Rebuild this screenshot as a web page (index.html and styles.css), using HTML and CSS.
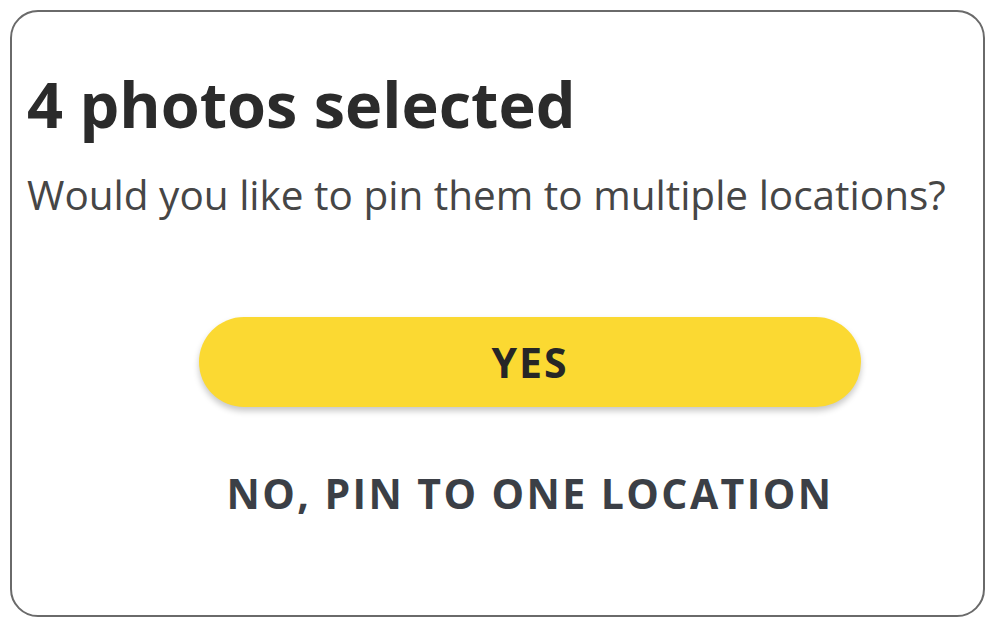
FILE: index.html
```html
<!DOCTYPE html>
<html>
<head>
<meta charset="utf-8">
<link rel="stylesheet" href="styles.css">
</head>
<body>
<div class="card">
  <h1 class="title">4 photos selected</h1>
  <p class="subtitle">Would you like to pin them to multiple locations?</p>
  <div class="actions">
    <button class="btn-yes">YES</button>
    <button class="btn-no">NO, PIN TO ONE LOCATION</button>
  </div>
</div>
</body>
</html>
```
FILE: styles.css
```css
html, body {
  margin: 0;
  padding: 0;
  background: #ffffff;
}
body {
  padding: 10px 11px 12px 10px;
  font-family: "Open Sans", Lato, sans-serif;
}
.card {
  box-sizing: border-box;
  height: 607px;
  border: 2px solid #6a6a6a;
  border-radius: 28px;
  padding: 54px 0 0 15px;
}
.title {
  margin: 0;
  font-size: 63px;
  font-weight: 700;
  line-height: 76px;
  color: #2b2b2b;
}
.subtitle {
  margin: 28px 0 0 0;
  font-size: 40.5px;
  line-height: 50px;
  color: #464646;
}
.actions {
  display: flex;
  flex-direction: column;
  align-items: center;
  padding-left: 50px;
}
.btn-yes {
  margin-top: 97px;
  width: 662px;
  height: 90px;
  border: none;
  border-radius: 45px;
  background: #fbd932;
  box-shadow: 0 4px 6px rgba(0,0,0,0.22);
  font-family: inherit;
  font-size: 41px;
  font-weight: 700;
  letter-spacing: 2px;
  color: #262626;
}
.btn-no {
  margin-top: 57px;
  border: none;
  background: none;
  font-family: inherit;
  font-size: 41px;
  font-weight: 700;
  letter-spacing: 2.4px;
  color: #3b3f46;
}
```
